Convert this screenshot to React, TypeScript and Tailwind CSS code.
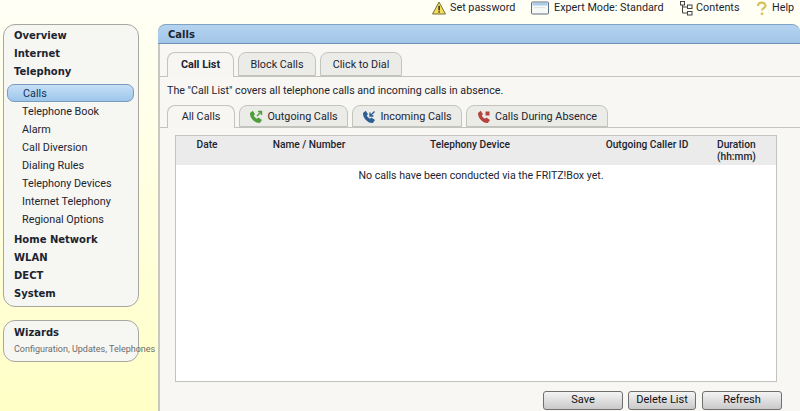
import type { ReactNode } from "react";

const subItems = ["Telephone Book", "Alarm", "Call Diversion", "Dialing Rules", "Telephony Devices", "Internet Telephony", "Regional Options"];
const lowerItems = ["Home Network", "WLAN", "DECT", "System"];

function PhoneIcon({ color, children }: { color: string; children?: ReactNode }) {
  return (
    <svg width="14" height="14" viewBox="0 0 14 14" className="shrink-0">
      <path
        d="M1 3 L3.8 0.8 L6 4.2 L4.8 5.6 C5.2 6.8 6.6 8.2 8 8.8 L9.4 7.6 L13 10 L10.8 13 C5.8 13.4 0.6 8 1 3 Z"
        fill={color}
      />
      {children}
    </svg>
  );
}

function TopLink({ icon, label, className }: { icon: ReactNode; label: string; className: string }) {
  return (
    <div className={`flex items-center ${className}`}>
      {icon}
      <span>{label}</span>
    </div>
  );
}

function Tab({ label, active, bold, width, icon }: { label: string; active?: boolean; bold?: boolean; width: string; icon?: ReactNode }) {
  return (
    <div
      className={`flex items-center justify-center gap-[4px] rounded-t-[8px] border border-[#c4c4bf] pt-[2px] ${width} ${
        active ? "relative -mb-px border-b-0 bg-[#f7f6f2] pb-px" : "bg-[#ebebe8]"
      } ${bold ? "font-bold" : ""}`}
    >
      {icon}
      <span>{label}</span>
    </div>
  );
}

function PageButton({ label, width }: { label: string; width: string }) {
  return (
    <button className={`h-[19px] rounded-[3px] border border-[#6f6f6f] bg-gradient-to-b from-[#f4f4f4] to-[#c9c9c9] text-[11px] text-[#111] ${width}`}>
      {label}
    </button>
  );
}

export default function App() {
  return (
    <div className="relative h-[411px] w-[800px] overflow-hidden bg-gradient-to-b from-[#fffff6] to-[#ffffc6] font-['Roboto',sans-serif] text-[10.8px] text-[#1c2430]">
      {/* Top links */}
      <div className="flex h-[24px] items-start justify-end">
        <TopLink
          className="w-[99px] gap-[4px]"
          label="Set password"
          icon={
            <svg width="14" height="14" viewBox="0 0 14 14">
              <path d="M7 1 L13.5 13 H0.5 Z" fill="#f6dc5a" stroke="#77703a" strokeLinejoin="round" />
              <rect x="6.4" y="4.8" width="1.4" height="4.6" fill="#222" />
              <rect x="6.4" y="10.2" width="1.4" height="1.4" fill="#222" />
            </svg>
          }
        />
        <TopLink
          className="w-[149px] gap-[5px]"
          label="Expert Mode: Standard"
          icon={
            <svg width="18" height="14" viewBox="0 0 18 14">
              <rect x="0.5" y="1" width="17" height="12" rx="1" fill="#f6f8f6" stroke="#5f6f80" />
              <rect x="1.5" y="2" width="15" height="2.5" fill="#a9cdea" />
              <rect x="3" y="6" width="11" height="1" fill="#dfe5e5" />
            </svg>
          }
        />
        <TopLink
          className="w-[76px] gap-[3px]"
          label="Contents"
          icon={
            <svg width="13" height="15" viewBox="0 0 13 15" fill="#fff" stroke="#444">
              <rect x="0.5" y="0.5" width="4" height="3.5" />
              <rect x="7.5" y="4" width="4.5" height="3.5" />
              <rect x="7.5" y="10.5" width="4.5" height="3.5" />
              <path d="M2.5 4 V12 H7.5 M2.5 6 H7.5" fill="none" />
            </svg>
          }
        />
        <TopLink
          className="w-[44px] gap-[5px]"
          label="Help"
          icon={
            <svg width="11" height="15" viewBox="0 0 11 15" fill="none">
              <path d="M2 5 C2 0.5 9.5 0.5 9.5 4.8 C9.5 7 6 7.2 6 9.5" stroke="#d8c15c" strokeWidth="2.2" />
              <circle cx="6" cy="12.8" r="1.4" fill="#d8c15c" />
            </svg>
          }
        />
      </div>

      <div className="flex h-[387px] items-start">
        {/* Sidebar */}
        <div className="ml-[3px] flex w-[136px] shrink-0 flex-col gap-[13px]">
          <nav className="flex h-[283px] flex-col rounded-[12px] border border-[#a7a79f] bg-[#f6f6f3] px-[3px] pt-px">
            {["Overview", "Internet", "Telephony"].map((item) => (
              <div key={item} className="flex h-[18px] items-center pl-[7px] font-['DejaVu_Sans',sans-serif] text-[10px] font-bold">
                {item}
              </div>
            ))}
            <div className="mb-px mr-px mt-[4px] flex h-[18px] items-center rounded-[7px] border border-[#7b9bbd] bg-gradient-to-b from-[#c6dff5] to-[#9cc6ec] pl-[15px] pt-[2px] text-[#12305a]">
              Calls
            </div>
            {subItems.map((item) => (
              <div key={item} className="flex h-[18px] items-center pl-[15px]">
                {item}
              </div>
            ))}
            <div className="h-px" />
            {lowerItems.map((item) => (
              <div key={item} className="flex h-[18px] items-center pl-[7px] font-['DejaVu_Sans',sans-serif] text-[10px] font-bold">
                {item}
              </div>
            ))}
          </nav>
          <div className="flex h-[42px] flex-col rounded-[12px] border border-[#a7a79f] bg-[#f6f6f3] pl-[10px] pt-[4px]">
            <div className="font-['DejaVu_Sans',sans-serif] text-[10px] font-bold">Wizards</div>
            <div className="mt-[3px] whitespace-nowrap text-[9px] text-[#6c6c6c]">Configuration, Updates, Telephones</div>
          </div>
        </div>

        {/* Content panel */}
        <main className="ml-[19px] flex h-[400px] w-[642px] flex-col rounded-tl-[8px] rounded-tr-[8px] border-l-2 border-l-[#c8c8c0] bg-[#f8f7f3]">
          <div className="-ml-[2px] flex h-[20px] items-center rounded-t-[8px] border-b border-t border-b-[#6f93b5] border-t-[#7fa3c5] bg-gradient-to-b from-[#b5d3ef] to-[#a2c6e8] pl-[10px] pt-px font-['DejaVu_Sans',sans-serif] text-[10px] font-bold">
            Calls
          </div>
          <div className="mt-[8px] flex h-[25px] gap-[4px] border-b border-[#c4c4bf] pl-[7px]">
            <Tab label="Call List" active bold width="w-[67px]" />
            <Tab label="Block Calls" width="w-[78px]" />
            <Tab label="Click to Dial" width="w-[82px]" />
          </div>
          <p className="ml-[7px] mt-[6px] h-[16px] text-[10.7px] leading-[16px]">The "Call List" covers all telephone calls and incoming calls in absence.</p>
          <div className="mt-[6px] flex h-[23px] gap-[4px] border-b border-[#c4c4bf] pl-[7px]">
            <Tab label="All Calls" active width="w-[68px]" />
            <Tab
              label="Outgoing Calls"
              width="w-[109px]"
              icon={
                <PhoneIcon color="#4f9e3c">
                  <path d="M8 6 L12.5 1.5 M9 1.5 H12.5 V5" stroke="#4f9e3c" strokeWidth="1.4" fill="none" />
                </PhoneIcon>
              }
            />
            <Tab
              label="Incoming Calls"
              width="w-[110px]"
              icon={
                <PhoneIcon color="#2c5f96">
                  <path d="M12.5 1.5 L8 6 M8 2.5 V6 H11.5" stroke="#2c5f96" strokeWidth="1.4" fill="none" />
                </PhoneIcon>
              }
            />
            <Tab
              label="Calls During Absence"
              width="w-[142px]"
              icon={
                <PhoneIcon color="#b8423e">
                  <rect x="8.5" y="1.5" width="4" height="4" fill="#b8423e" />
                </PhoneIcon>
              }
            />
          </div>

          {/* Call table */}
          <div className="ml-[15px] mt-[7px] flex h-[247px] w-[602px] flex-col border border-[#c4c4bf] bg-white">
            <div className="grid h-[29px] shrink-0 grid-cols-[62px_142px_180px_157px_1fr] bg-[#ebebeb] pt-[3px] text-[10.2px] font-medium leading-[12px]">
              <span className="text-center">Date</span>
              <span className="text-center">Name / Number</span>
              <span className="text-center">Telephony Device</span>
              <span className="pl-[17px] text-center">Outgoing Caller ID</span>
              <span>
                Duration
                <br />
                (hh:mm)
              </span>
            </div>
            <p className="mt-[3px] pl-[10px] text-center text-[10.6px]">No calls have been conducted via the FRITZ!Box yet.</p>
          </div>
          <div className="ml-[383px] mt-[9px] flex">
            <PageButton label="Save" width="w-[80px]" />
            <PageButton label="Delete List" width="ml-[5px] w-[68px]" />
            <PageButton label="Refresh" width="ml-[6px] w-[80px]" />
          </div>
        </main>
      </div>
    </div>
  );
}
